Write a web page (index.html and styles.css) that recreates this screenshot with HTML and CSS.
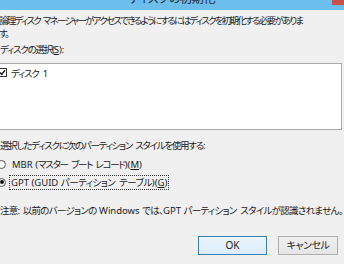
FILE: index.html
```html
<!DOCTYPE html>
<html lang="ja">
<head>
<meta charset="utf-8">
<link rel="stylesheet" href="styles.css">
</head>
<body>
<div class="dialog">
  <div class="titlebar">
    <span class="title">ディスクの初期化</span>
    <span class="close"></span>
  </div>
  <div class="content">
    <p class="intro">論理ディスク マネージャーがアクセスできるようにするにはディスクを初期化する必要がありま<br>す。</p>
    <p class="label">ディスクの選択(<u class="en">S</u><span class="en">):</span></p>
    <div class="listbox">
      <div class="item">
        <span class="check"><svg width="9" height="9" viewBox="0 0 9 9"><rect x="0.5" y="0.5" width="8" height="8" fill="#fff" stroke="#333"/><path d="M2 4.5 L3.8 6.5 L7 2.2" fill="none" stroke="#111" stroke-width="1.4"/></svg></span>
        <span>ディスク<span class="en num">1</span></span>
      </div>
    </div>
    <p class="label2">選択したディスクに次のパーティション スタイルを使用する<span class="en">:</span></p>
    <div class="radio first"><span class="circle"></span><span class="rtext"><span class="en">MBR (</span>マスター ブート レコード<span class="en">)(<u>M</u>)</span></span></div>
    <div class="radio"><span class="circle on"></span><span class="rtext focus"><span class="en">GPT (GUID </span>パーティション テーブル<span class="en">)(<u>G</u>)</span></span></div>
    <p class="note">注意<span class="en">: </span>以前のバージョンの<span class="en"> Windows </span>では、<span class="en">GPT </span>パーティション スタイルが認識されません。</p>
    <div class="buttons">
      <button class="btn default"><span class="en">OK</span></button>
      <button class="btn">キャンセル</button>
    </div>
  </div>
</div>
</body>
</html>
```

FILE: styles.css
```css
html, body {
  margin: 0;
  padding: 0;
}
body {
  width: 344px;
  height: 264px;
  overflow: hidden;
  background: #f0f0f0;
  font-family: "Noto Sans", "Noto Sans CJK JP", sans-serif;
  font-feature-settings: "palt";
  font-size: 9.5px;
  letter-spacing: -1.25px;
  word-spacing: 2px;
  color: #1a1a1a;
}
.en {
  letter-spacing: 0;
  word-spacing: 0;
}
.num {
  margin-left: 4px;
}
.dialog {
  width: 344px;
  height: 264px;
  position: relative;
}
.titlebar {
  height: 10px;
  background: #6cbfec;
  overflow: hidden;
  display: flex;
  justify-content: center;
  position: relative;
}
.title {
  font-size: 12px;
  letter-spacing: -0.3px;
  line-height: 12px;
  margin-top: -7px;
  color: #1c2a36;
}
.close {
  position: absolute;
  right: 0;
  top: 0;
  width: 12px;
  height: 5px;
  background: #c9514b;
}
.content {
  padding: 4px 0 0 0;
}
p {
  margin: 0;
  line-height: 13px;
  white-space: nowrap;
}
.intro {
  margin-left: -1px;
  letter-spacing: -1.75px;
}
.label {
  margin-top: 3px;
}
.listbox {
  margin-top: 7px;
  margin-left: -6px;
  width: 348px;
  background: #fff;
  border: 1px solid #a9a9a9;
  box-sizing: border-box;
  height: 67px;
}
.item {
  display: flex;
  align-items: center;
  gap: 4px;
  margin-left: 3px;
  margin-top: 2px;
  height: 13px;
}
.check {
  display: flex;
}
.label2 {
  margin-top: 9px;
}
.radio {
  display: flex;
  align-items: center;
  height: 14px;
  margin-left: -3px;
  gap: 6px;
  white-space: nowrap;
}
.radio.first {
  margin-top: 5px;
}
.radio + .radio {
  margin-top: 4px;
}
.circle {
  width: 9px;
  height: 9px;
  flex: none;
  border-radius: 50%;
  border: 1px solid #555;
  background: #fff;
  box-sizing: border-box;
  position: relative;
}
.circle.on::after {
  content: "";
  position: absolute;
  left: 1.5px;
  top: 1.5px;
  width: 4px;
  height: 4px;
  border-radius: 50%;
  background: #111;
}
.rtext {
  line-height: 13px;
}
.focus {
  outline: 1px dotted #333;
  outline-offset: 0;
  padding: 0 1px;
  margin-left: -2px;
  letter-spacing: -0.5px;
}
.note {
  margin-top: 15px;
  letter-spacing: -0.7px;
}
.buttons {
  display: flex;
  justify-content: flex-end;
  gap: 11px;
  margin-top: 19px;
  padding-right: 6px;
}
.btn {
  font-family: inherit;
  font-feature-settings: "palt";
  font-size: 10px;
  letter-spacing: -0.5px;
  color: #1a1a1a;
  height: 19px;
  padding: 0;
  border: 1px solid #adadad;
  background: linear-gradient(#f0f0f0, #e5e5e5);
  width: 60px;
  line-height: 17px;
}
.btn.default {
  width: 69px;
  border-color: #3c7fb1;
  background: linear-gradient(#ecf4fc, #dcecfc);
}
```
